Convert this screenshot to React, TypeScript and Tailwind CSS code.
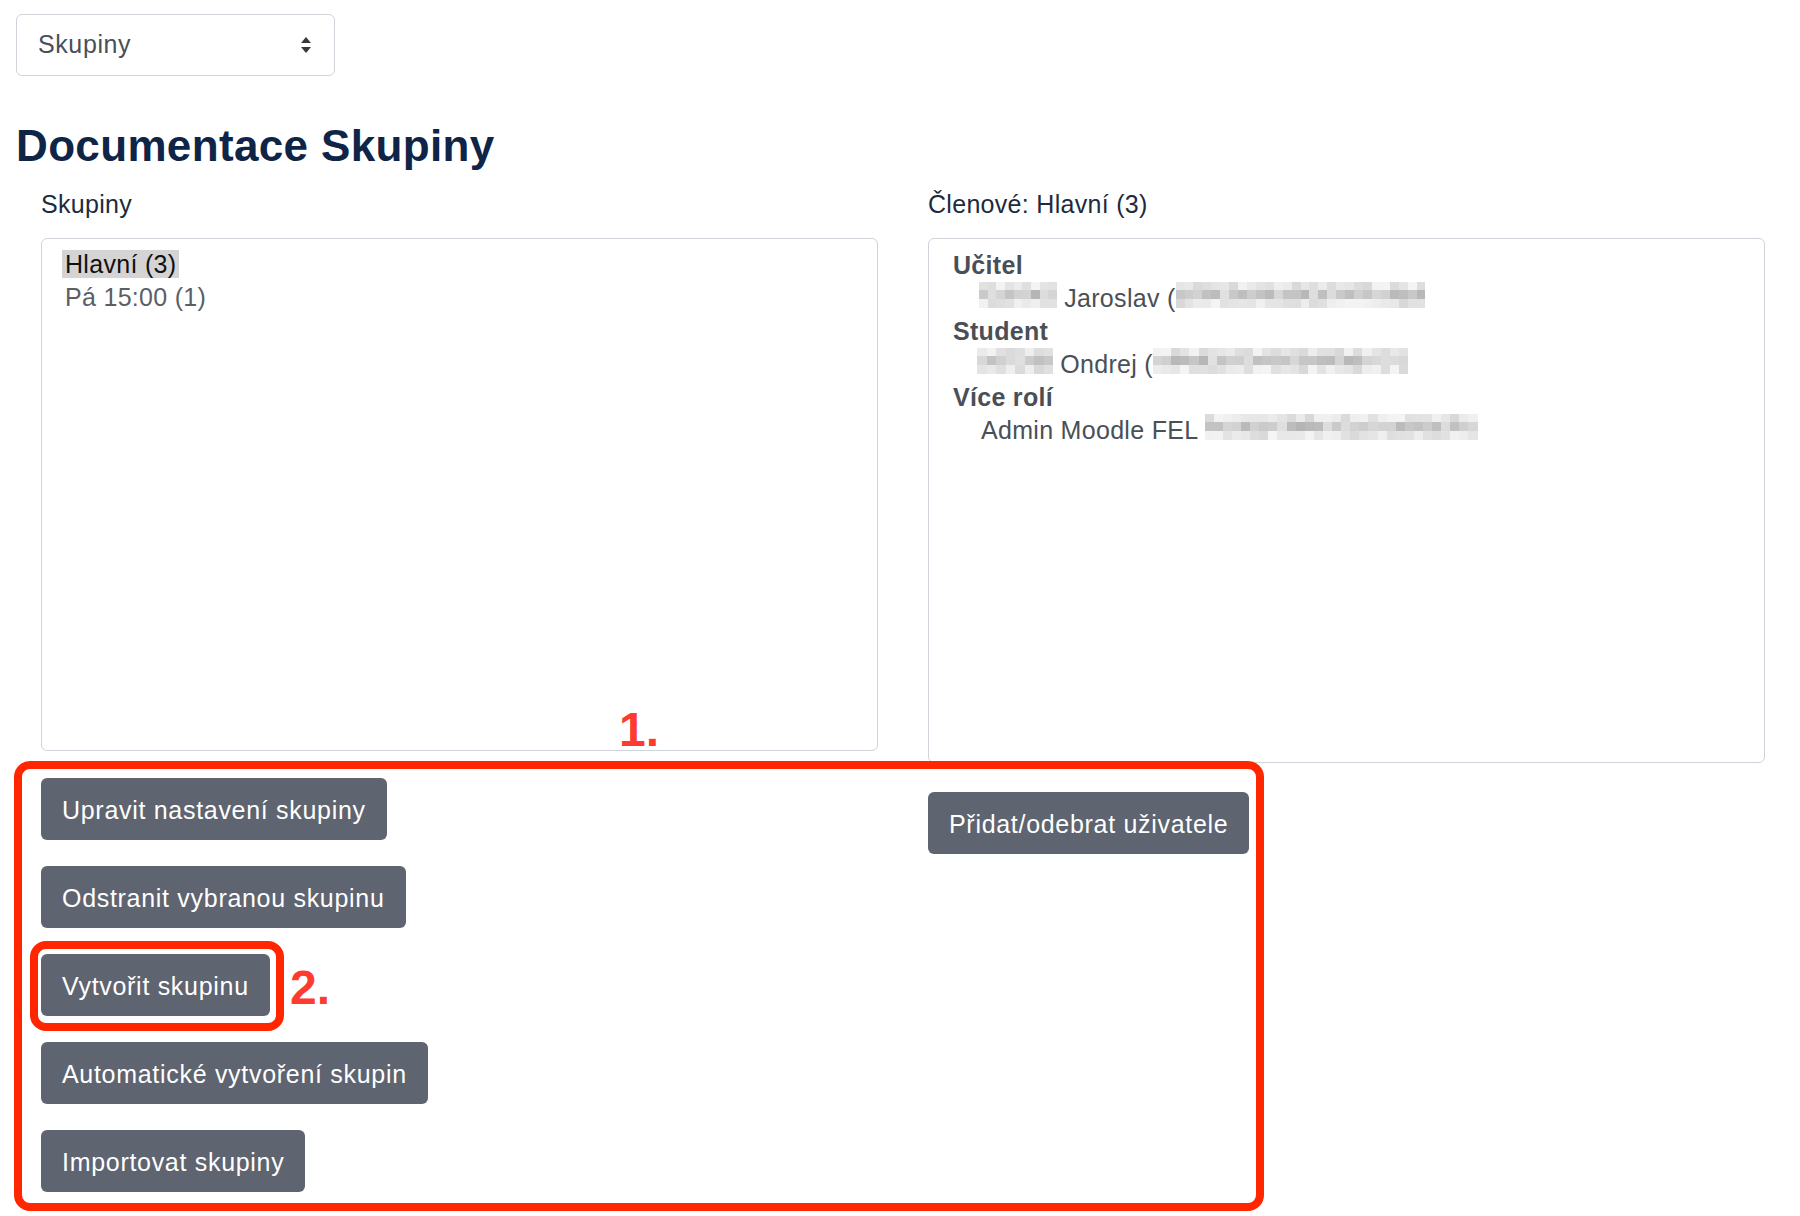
import React from "react";

function rnd(seed: number) {
  let s = seed;
  return () => {
    s = (s * 9301 + 49297) % 233280;
    return s / 233280;
  };
}

function Pix({ w, seed }: { w: number; seed: number }) {
  const cols = Math.max(1, Math.round(w / 9));
  const r = rnd(seed);
  const rows = [0, 1, 2].map((row) =>
    Array.from({ length: cols }, () => {
      const base = row === 1 ? 180 : 215;
      const v = Math.round(base + r() * (row === 1 ? 45 : 30));
      return `rgb(${v},${v},${v})`;
    })
  );
  return (
    <span className="inline-block align-[-1px] blur-[0.5px]" style={{ width: w, height: 26 }}>
      {rows.map((cells, i) => (
        <span key={i} className="flex h-1/3">
          {cells.map((c, j) => (
            <span key={j} className="h-full flex-1" style={{ background: c }} />
          ))}
        </span>
      ))}
    </span>
  );
}

function Btn({ children }: { children: React.ReactNode }) {
  return (
    <button className="h-[62px] self-start whitespace-nowrap rounded-[6px] bg-[#5e6470] px-[21px] pt-[3px] text-[25px] tracking-[0.7px] text-white">
      {children}
    </button>
  );
}

export default function App() {
  return (
    <div className="relative h-[1216px] w-[1800px] overflow-hidden bg-white font-['Liberation_Sans',Arial,sans-serif]">
      <div className="px-[16px] pt-[14px]">
        {/* select */}
        <div className="flex h-[62px] w-[319px] items-center justify-between rounded-[6px] border border-[#ced4da] pl-[21px] pr-[22px] text-[25px] tracking-[0.6px] text-[#495057]">
          <span>Skupiny</span>
          <svg width="12" height="18" viewBox="0 0 12 18" className="text-[#343a40]">
            <path d="M6 1 L11 7 L1 7 Z" fill="currentColor" />
            <path d="M6 17 L11 11 L1 11 Z" fill="currentColor" />
          </svg>
        </div>

        <h2 className="mt-[44px] text-[44px] font-bold leading-[1.2] tracking-[0.35px] text-[#0f2547]">
          Documentace Skupiny
        </h2>

        <div className="ml-[25px] mt-[17px] grid w-[1724px] grid-cols-[837px_837px] gap-x-[50px] tracking-[0.3px]">
          {/* left column */}
          <div className="flex flex-col">
            <div className="h-[29px] text-[25px] leading-[29px] text-[#1d2b3f]">Skupiny</div>
            <div className="mt-[19px] h-[513px] rounded-[6px] border border-[#ced4da] pl-[20px] pt-[9px] text-[25px] leading-[33px]">
              <div>
                <span className="bg-[#d4d4d4] px-[3px] text-[#111]">Hlavní (3)</span>
              </div>
              <div className="px-[3px] text-[#5a5f66]">Pá 15:00 (1)</div>
            </div>
            <div className="mt-[27px] flex flex-col gap-[26px]">
              <Btn>Upravit nastavení skupiny</Btn>
              <Btn>Odstranit vybranou skupinu</Btn>
              <Btn>Vytvořit skupinu</Btn>
              <Btn>Automatické vytvoření skupin</Btn>
              <Btn>Importovat skupiny</Btn>
            </div>
          </div>

          {/* right column */}
          <div className="flex flex-col">
            <div className="h-[29px] text-[25px] leading-[29px] text-[#1d2b3f]">Členové: Hlavní (3)</div>
            <div className="mt-[19px] h-[525px] rounded-[6px] border border-[#ced4da] pl-[24px] pt-[10px] text-[25px] leading-[33px] text-[#495057]">
              <div className="font-bold text-[#4a4f57]">Učitel</div>
              <div className="pl-[26px]">
                <Pix w={78} seed={3} /> Jaroslav (<Pix w={250} seed={7} />
              </div>
              <div className="font-bold text-[#4a4f57]">Student</div>
              <div className="pl-[24px]">
                <Pix w={76} seed={11} /> Ondrej (<Pix w={255} seed={17} />
              </div>
              <div className="font-bold text-[#4a4f57]">Více rolí</div>
              <div className="pl-[28px]">
                Admin Moodle FEL <Pix w={273} seed={23} />
              </div>
            </div>
            <div className="mt-[29px] flex flex-col">
              <Btn>Přidat/odebrat uživatele</Btn>
            </div>
          </div>
        </div>
      </div>

      {/* red annotations */}
      <div className="pointer-events-none absolute left-[14px] top-[761px] h-[450px] w-[1250px] rounded-[16px] border-[8px] border-[#ff2600]" />
      <div className="pointer-events-none absolute left-[619px] top-[706px] text-[48px] font-bold leading-none text-[#ff3b30]">
        1.
      </div>
      <div className="pointer-events-none absolute left-[30px] top-[941px] h-[90px] w-[254px] rounded-[16px] border-[8px] border-[#ff2600]" />
      <div className="pointer-events-none absolute left-[290px] top-[964px] text-[48px] font-bold leading-none text-[#ff3b30]">
        2.
      </div>
    </div>
  );
}
